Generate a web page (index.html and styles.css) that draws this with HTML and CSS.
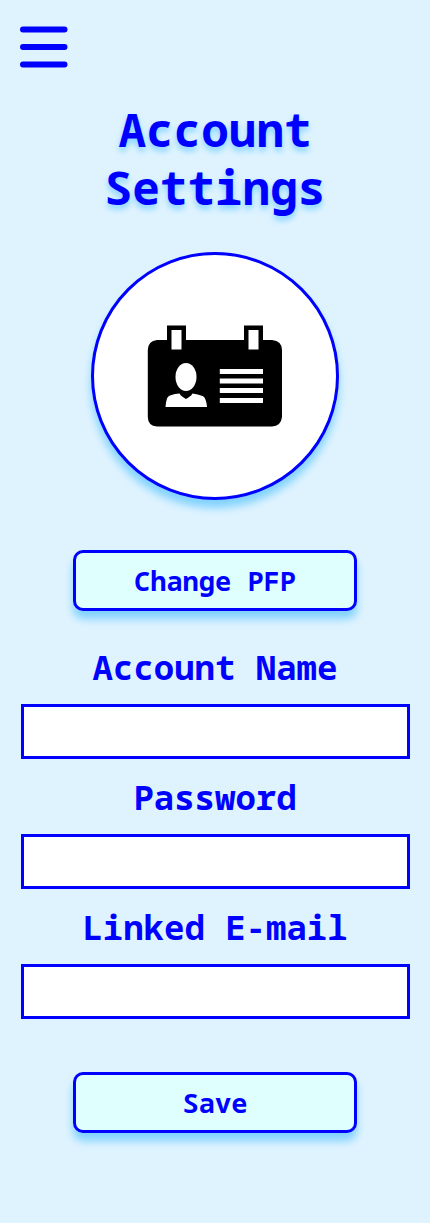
FILE: index.html
```html
<!DOCTYPE html>
<html lang="en">
<head>
  <meta charset="utf-8">
  <meta name="viewport" content="width=device-width, initial-scale=1">
  <title>Account Settings</title>
  <link rel="stylesheet" href="styles.css">
</head>
<body>
  <header class="topbar">
    <button class="menu" type="button" aria-label="Open menu">
      <svg class="menu-icon" viewBox="0 0 48 42" aria-hidden="true">
        <path d="M3 3.500H44.500M3 21H44.500M3 38.500H44.500" fill="none" stroke="#00f" stroke-width="6" stroke-linecap="round"/>
      </svg>
    </button>
  </header>
  <main class="page">
    <h1 class="title">Account Settings</h1>
    <div class="avatar">
      <svg class="avatar-icon" viewBox="0 0 136 102" role="img" aria-label="Profile picture">
        <path d="M20 15V0.500H39V15H97V0.500H116V15H125Q135 16 135 25V92Q134 101 125 101.500H10Q1 101 0.800 92V25Q1 16 10 15Z"/>
        <g fill="#fff">
          <path d="M24.500 5H34.500V24.500H24.500ZM101.500 5H111.500V24.500H101.500Z"/>
          <ellipse cx="39" cy="52" rx="10.500" ry="14"/>
          <path d="M18.500 82C19.500 73 20.500 71.500 23 70.500Q28 68.500 32.500 68.500C34 71.500 37 72.500 39 74C41 72.500 44 71.500 45.500 68.500Q51 69 55.500 71C58 72 59.500 76 60 82Z"/>
          <path d="M72.800 44H116V49H72.800ZM72.800 53.500H116V58.500H72.800ZM72.800 63H116V68H72.800ZM72.800 73H116V78H72.800Z"/>
        </g>
      </svg>
    </div>
    <button class="button" type="button">Change PFP</button>
    <form class="form">
      <div class="field">
        <label class="label" for="name">Account Name</label>
        <input class="input" id="name" type="text">
      </div>
      <div class="field">
        <label class="label" for="password">Password</label>
        <input class="input" id="password" type="password">
      </div>
      <div class="field">
        <label class="label" for="email">Linked E-mail</label>
        <input class="input" id="email" type="email">
      </div>
      <button class="button save" type="button">Save</button>
    </form>
  </main>
</body>
</html>
```
FILE: styles.css
```css
* {
  box-sizing: border-box;
}

body {
  margin: 0;
  background: #dff3ff;
  color: #00f;
  font-family: Consolas, "Noto Sans Mono", "DejaVu Sans Mono", monospace;
  font-weight: bold;
}

.topbar {
  padding: 26px 20px 0;
}

.menu {
  display: block;
  padding: 0;
  border: 0;
  background: none;
  cursor: pointer;
}

.menu-icon {
  display: block;
  width: 48px;
  height: 42px;
}

.page {
  display: flex;
  flex-direction: column;
  align-items: center;
  padding: 32px 20px 82px;
}

.title {
  max-width: 280px;
  margin: 0 0 36px;
  font-size: 46px;
  line-height: 58px;
  text-align: center;
  text-shadow: 0 4px 6px #80d2ff;
}

.avatar {
  display: flex;
  align-items: center;
  justify-content: center;
  width: 248px;
  height: 248px;
  margin-bottom: 50px;
  border: 3px solid #00f;
  border-radius: 50%;
  background: #fff;
  box-shadow: 0 8px 8px #80d2ff;
}

.avatar-icon {
  width: 136px;
  height: 102px;
}

.button {
  width: 284px;
  max-width: 100%;
  height: 61px;
  padding: 0;
  border: 3px solid #00f;
  border-radius: 10px;
  background: #dfffff;
  box-shadow: 0 8px 8px #80d2ff;
  color: inherit;
  font: inherit;
  font-size: 27px;
  cursor: pointer;
}

.form {
  display: flex;
  flex-direction: column;
  align-items: center;
  gap: 18px;
  width: 100%;
  margin-top: 36px;
}

.field {
  display: flex;
  flex-direction: column;
  gap: 17px;
  width: 100%;
}

.label {
  font-size: 34px;
  line-height: 40px;
  text-align: center;
}

.input {
  height: 55px;
  margin-left: 1px;
  padding: 0 12px;
  border: 3px solid #00f;
  border-radius: 0;
  background: #fff;
  color: inherit;
  font: inherit;
  font-size: 27px;
}

.save {
  margin-top: 35px;
}
```
